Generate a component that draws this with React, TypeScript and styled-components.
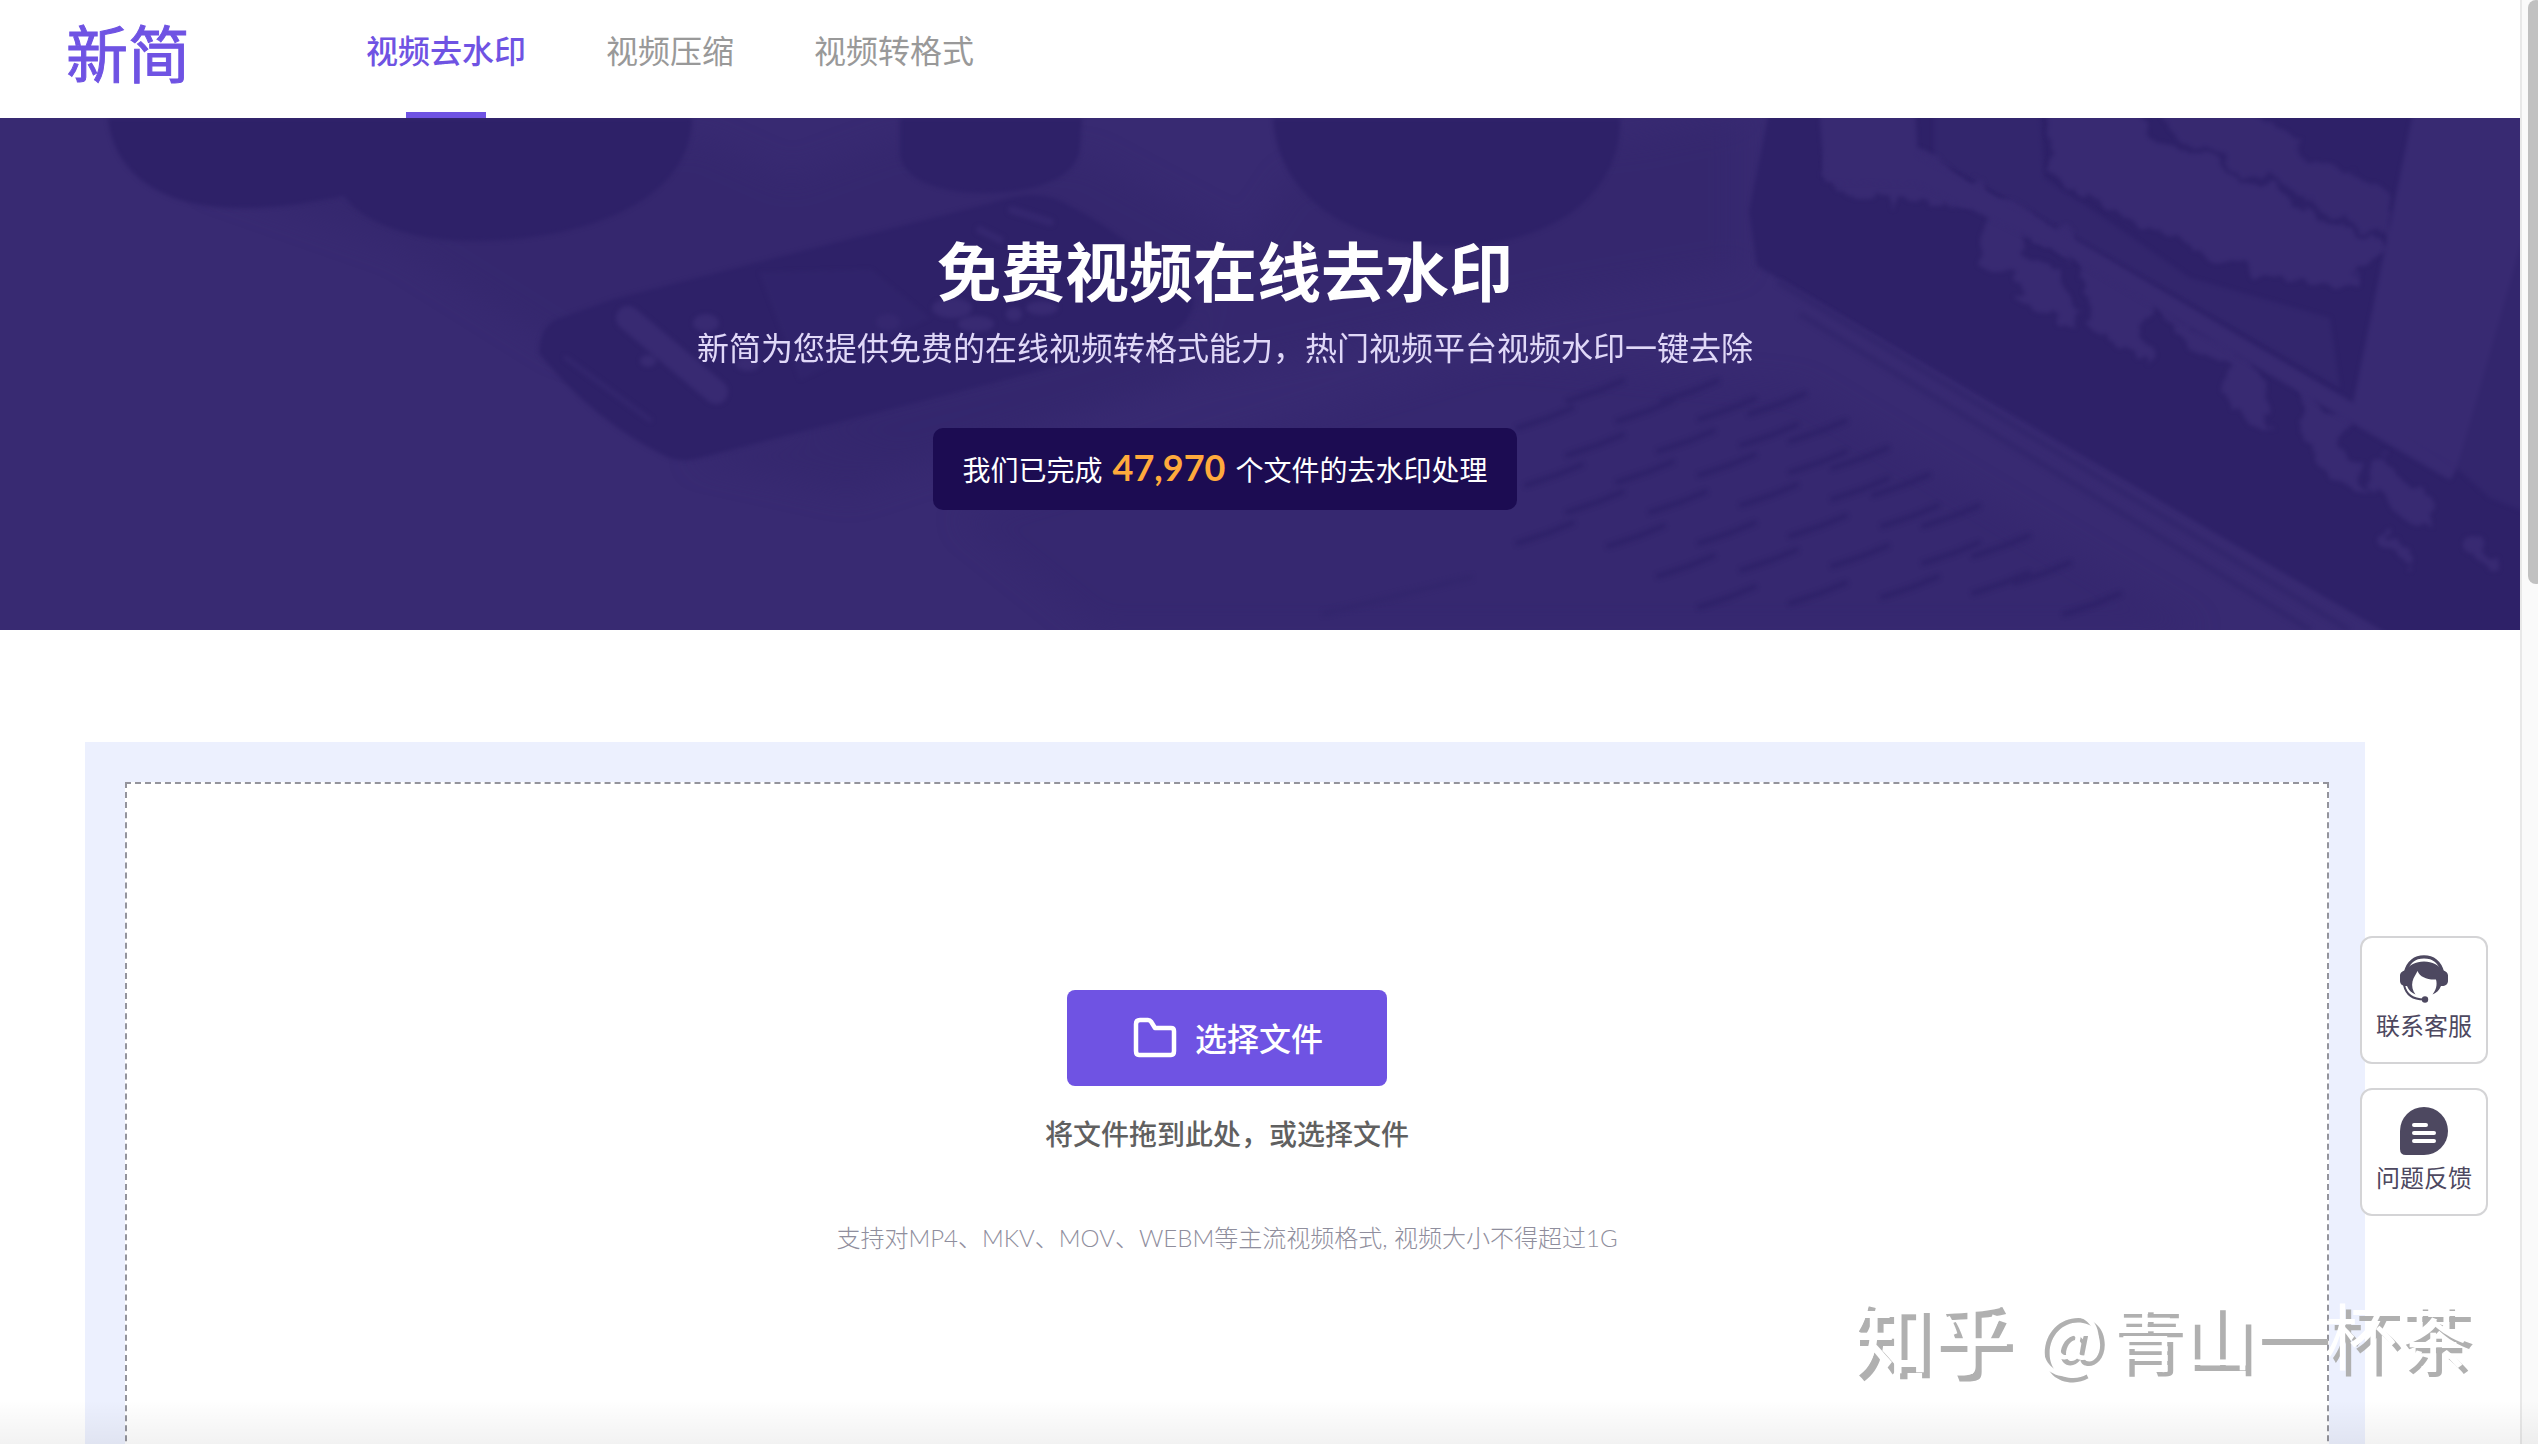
import React from "react";
import styled, { createGlobalStyle } from "styled-components";

const colors = {
  brand: "#6f53e3",
  hero: "#382a72",
  heroMid: "#33266d",
  heroDark: "#2e2168",
  pill: "#1c0c52",
  amber: "#ffaa3c",
  panel: "#ecf0fe",
  ink: "#4d4860",
};

const GlobalStyle = createGlobalStyle`
  *, *::before, *::after { box-sizing: border-box; }
  body {
    margin: 0;
    background: #fff;
    font-family: Lato, "Noto Sans CJK SC", sans-serif;
  }
  h1, p { margin: 0; }
`;

const Shell = styled.div`
  position: relative;
  display: flex;
  height: 100vh;
  overflow: hidden;
`;

const Page = styled.div`
  flex: 1;
  min-width: 0;
`;

const Header = styled.header`
  display: flex;
  align-items: stretch;
  height: 118px;
  padding-left: 66px;
  background: #fff;
`;

const Logo = styled.a`
  width: 300px;
  color: ${colors.brand};
  font-size: 62px;
  font-weight: 400;
  line-height: 108px;
  text-decoration: none;
  -webkit-text-stroke: 1px ${colors.brand};
`;

const Nav = styled.nav`
  display: flex;
  gap: 80px;
`;

const NavLink = styled.a<{ $active?: boolean }>`
  display: flex;
  flex-direction: column;
  align-items: center;
  justify-content: space-between;
  color: ${(p) => (p.$active ? colors.brand : "#999")};
  font-size: 32px;
  font-weight: ${(p) => (p.$active ? 500 : 400)};
  line-height: 102px;
  text-decoration: none;

  &::after {
    content: "";
    width: 80px;
    height: 6px;
    background: ${(p) => (p.$active ? colors.brand : "transparent")};
  }
`;

const Hero = styled.section`
  position: relative;
  display: flex;
  flex-direction: column;
  align-items: center;
  height: 512px;
  padding: 106px 70px 0 0;
  background: ${colors.hero};
  overflow: hidden;
`;

const HeroArt = styled.svg`
  position: absolute;
  inset: 0;
  width: 100%;
  height: 100%;
`;

const HeroTitle = styled.h1`
  position: relative;
  color: #fff;
  font-size: 64px;
  font-weight: 700;
  line-height: 96px;
`;

const HeroText = styled.p`
  position: relative;
  color: #e0d8f8;
  font-size: 32px;
  font-weight: 400;
  line-height: 56px;
`;

const Counter = styled.p`
  position: relative;
  display: flex;
  align-items: center;
  gap: 10px;
  height: 82px;
  margin-top: 52px;
  padding: 0 30px;
  border-radius: 10px;
  background: ${colors.pill};
  color: #fff;
  font-size: 28px;
  font-weight: 400;
`;

const CounterValue = styled.strong`
  padding-bottom: 4px;
  color: ${colors.amber};
  font-size: 36px;
  font-weight: 700;
`;

const Panel = styled.main`
  margin: 112px 155px 0 85px;
  padding: 40px 36px 40px 40px;
  background: ${colors.panel};
`;

const DropZone = styled.section`
  display: flex;
  flex-direction: column;
  align-items: center;
  min-height: 800px;
  padding-top: 206px;
  border: 2px dashed #94949c;
  background: #fff;
`;

const PickButton = styled.button`
  display: flex;
  align-items: center;
  justify-content: center;
  gap: 16px;
  width: 320px;
  height: 96px;
  padding: 0 0 2px;
  border: 0;
  border-radius: 8px;
  background: ${colors.brand};
  color: #fff;
  font: inherit;
  font-size: 32px;
  font-weight: 500;
`;

const DropHint = styled.p`
  margin-top: 28px;
  color: #606060;
  font-size: 28px;
  font-weight: 500;
  line-height: 40px;
`;

const DropNote = styled.p`
  margin-top: 66px;
  color: #8f8e9d;
  font-size: 24px;
  font-weight: 300;
  line-height: 36px;
`;

const SideTools = styled.aside`
  position: absolute;
  top: 936px;
  right: 50px;
  display: flex;
  flex-direction: column;
  gap: 24px;
`;

const SideButton = styled.button`
  display: flex;
  flex-direction: column;
  align-items: center;
  width: 128px;
  height: 128px;
  padding: 17px 0 0;
  border: 2px solid #d4d4d6;
  border-radius: 12px;
  background: #fff;
  color: ${colors.ink};
  font: inherit;
  font-size: 24px;
  font-weight: 400;
  line-height: 46px;
`;

const Watermark = styled.div`
  position: absolute;
  right: 69px;
  bottom: 59px;
  display: flex;
  align-items: center;
  color: #fff;
  font-family: "Noto Sans CJK SC", sans-serif;
  font-size: 72px;
  line-height: 104px;
  text-shadow: 6px 6px 0 #b0b0b0;
`;

const WatermarkBrand = styled.span`
  margin-right: 24px;
  font-size: 80px;
  font-weight: 500;
`;

const WatermarkAt = styled.span`
  margin-right: 6px;
`;

const BottomShade = styled.div`
  position: absolute;
  inset: auto 0 0;
  height: 44px;
  background: linear-gradient(rgba(0, 0, 0, 0), rgba(0, 0, 0, 0.05));
  pointer-events: none;
`;

const ScrollTrack = styled.div`
  flex: none;
  width: 18px;
  padding-left: 6px;
  border-left: 2px solid #e8e8e8;
  background: #fafafa;
  overflow: hidden;
`;

const ScrollThumb = styled.div`
  width: 16px;
  height: 584px;
  border-radius: 8px;
  background: #c1c1c1;
`;

const keys: [number, number][] = [
  [1596, 273], [1691, 273], [1778, 286],
  [1546, 300], [1646, 293], [1728, 291], [1819, 313],
  [1596, 327], [1687, 323], [1770, 317], [1861, 340],
  [1555, 357], [1646, 354], [1728, 347], [1819, 344], [1902, 367],
  [1596, 384], [1679, 384], [1770, 377], [1861, 371], [1952, 398],
  [1546, 415], [1637, 418], [1728, 415], [1819, 408], [1911, 398], [2002, 428],
  [1687, 448], [1770, 442], [1861, 438], [1952, 435], [2043, 455],
  [1728, 479], [1819, 475], [1911, 469], [2002, 465], [2093, 486],
];

function DeskScene() {
  return (
    <HeroArt viewBox="0 0 2520 512" preserveAspectRatio="xMidYMid slice" aria-hidden="true">
      <defs>
        <filter id="soft" x="-10%" y="-10%" width="120%" height="120%" colorInterpolationFilters="sRGB">
          <feGaussianBlur stdDeviation="14" />
        </filter>
        <filter id="edge" x="-5%" y="-5%" width="110%" height="110%" colorInterpolationFilters="sRGB">
          <feGaussianBlur stdDeviation="2" />
        </filter>
        <filter id="ragged" x="-5%" y="-5%" width="110%" height="110%" colorInterpolationFilters="sRGB">
          <feTurbulence type="fractalNoise" baseFrequency="0.035" numOctaves="3" seed="4" result="noise" />
          <feDisplacementMap in="SourceGraphic" in2="noise" scale="34" xChannelSelector="R" yChannelSelector="G" />
          <feGaussianBlur stdDeviation="2" />
        </filter>
      </defs>

      <g fill={colors.heroMid} filter="url(#soft)">
        <path d="M200 60L700 20L790 60L900 20L1090 40L1240 120L1180 260L900 340L560 230L400 130Z" opacity="0.6" />
        <path d="M690 340L1190 210L1290 60L1640 20L1740 0V150L1560 180L1200 260L850 375Z" opacity="0.6" />
        <path d="M960 400L1500 240L1800 270L2200 512H1100Z" opacity="0.5" />
      </g>

      <g fill={colors.heroDark} filter="url(#edge)">
        <path d="M108 0C112 46 150 90 240 90C290 90 320 82 344 78C362 104 410 123 473 123C590 123 692 80 692 0Z" />
        <path d="M900 0V36C902 62 940 75 983 75C1040 75 1078 58 1080 30L1082 0Z" />
        <path d="M1273 0C1276 70 1340 128 1450 128C1560 128 1622 70 1620 0Z" />
        <path d="M995 84Q1040 68 1070 88Q1120 112 1194 181Q1192 214 1144 226L700 340Q680 346 663 337Q590 300 539 235Q540 206 560 200L614 181Z" />
      </g>

      <g fill={colors.hero} stroke={colors.hero} filter="url(#edge)">
        <path d="M628 200L716 274" strokeWidth="24" strokeLinecap="round" />
        <path d="M1012 92L1050 104M980 112L1000 122" strokeWidth="8" strokeLinecap="round" opacity="0.7" />
        <path d="M566 240L650 302" strokeWidth="5" strokeLinecap="round" opacity="0.6" />
        <path d="M759 154L871 151L930 200L800 262Z" opacity="0.25" stroke="none" />
        <g stroke="none">
          <ellipse cx="706" cy="205" rx="13" ry="9" />
          <ellipse cx="648" cy="243" rx="8" ry="6" />
          <ellipse cx="748" cy="246" rx="12" ry="7" />
          <ellipse cx="888" cy="204" rx="12" ry="8" opacity="0.7" />
          <ellipse cx="952" cy="190" rx="20" ry="10" />
          <ellipse cx="976" cy="206" rx="18" ry="8" />
          <ellipse cx="1014" cy="196" rx="8" ry="7" />
          <ellipse cx="1042" cy="190" rx="16" ry="7" />
        </g>
      </g>

      <path filter="url(#edge)" fill={colors.heroDark} d="M1770 -10L1749 93L1757 148L2395 520H2540V-10Z" />
      <path filter="url(#edge)" fill={colors.heroMid} d="M1934 -10H2040L2044 60L2110 104L2190 160L2330 200L2340 270L2070 116L1934 40Z" />
      <g filter="url(#ragged)" fill={colors.hero}>
        <path d="M2051 -20H2117L2175 29L2382 124L2358 168L2258 158L2109 93L2047 53Z" />
        <path d="M2142 -20H2233L2308 33L2391 77V120L2192 29Z" opacity="0.85" />
        <path d="M1825 60L1850 82L1880 70L1900 92L1920 76L1960 96L1990 84L2068 140L2068 120L1918 30H1825Z" />
        <path d="M1977 80L2030 104L2020 138L2060 150L2076 208L2030 185L2010 158L1980 152Z" />
        <path d="M2080 130L2160 176L2146 190L2150 245L2108 222L2088 196Z" />
        <path d="M2150 180L2236 232L2262 256L2275 312L2234 294L2226 250L2176 224Z" />
        <path d="M2290 260L2346 300L2340 330L2374 372L2326 356L2308 328Z" />
        <path d="M2376 340L2420 368L2438 416L2370 378Z" />
        <path d="M2390 418L2406 446M2470 420L2486 444" stroke={colors.hero} strokeWidth="12" strokeLinecap="round" />
      </g>
      <g filter="url(#edge)">
        <g fill={colors.hero}>
          <path d="M1819 -10H1915L1918 38L2068 117L2355 286L2457 350L2450 362L2340 298L2068 138L1918 66L1825 64Z" />
          <path d="M2414 -10H2540V93L2457 350L2353 286Z" />
        </g>
        <path fill={colors.heroMid} d="M2540 60L2457 350L2490 380L2540 400Z" />
        <path fill="none" stroke={colors.heroMid} strokeWidth="6" d="M1778 164L2349 512M1800 196L2310 512" />
        <path fill="none" stroke={colors.heroMid} strokeWidth="5" d="M1323 496L1472 459" />
      </g>

      <g fill="none" stroke={colors.heroDark} strokeWidth="6" strokeLinecap="round" opacity="0.8" filter="url(#edge)">
        {keys.map(([x, y]) => (
          <path key={`${x}-${y}`} d={`M${x - 28} ${y + 10}L${x + 2} ${y}L${x + 26} ${y - 10}`} />
        ))}
      </g>
    </HeroArt>
  );
}

function FolderIcon() {
  return (
    <svg width="48" height="48" viewBox="0 0 48 48" fill="none" aria-hidden="true">
      <path
        d="M5 11Q5 7 9 7H17Q19 7 20 8.500L24 15H40Q43 15 43 18V38Q43 42 40 42H8Q5 42 5 38Z"
        stroke="#fff"
        strokeWidth="4.500"
        strokeLinejoin="round"
      />
    </svg>
  );
}

function AgentIcon() {
  return (
    <svg width="48" height="48" viewBox="0 0 48 48" aria-hidden="true">
      <path d="M5.500 17C8 7 15 1.800 24 1.800S40 7 42.500 17" fill="none" stroke={colors.ink} strokeWidth="3.200" />
      <path d="M6 15.500C3 15.500 0 17.500 0 20.500V26C0 29 2.500 31 6 31H7C8.500 35 11.500 38 15.500 39.500C12.500 35.500 11.500 31 12.500 26.500C13.500 22 16 19.500 17.500 16C20 22 27 25 36 24.500C37.500 30 36 35 32.500 39.500C36.500 38 39.500 35 41 31H42C45.500 31 48 29 48 26V20.500C48 17.500 45 15.500 42 15.500C39 10 32.500 6.500 24 6.500S9 10 6 15.500Z" fill={colors.ink} />
      <path d="M4 30C6 39 13 44.500 24 44.500" fill="none" stroke={colors.ink} strokeWidth="2" />
      <circle cx="25" cy="44.500" r="3.200" fill={colors.ink} />
    </svg>
  );
}

function FeedbackIcon() {
  return (
    <svg width="48" height="48" viewBox="0 0 48 48" aria-hidden="true">
      <path d="M24 0A24 24 0 0 1 24 48H6Q0 48 0 42V24A24 24 0 0 1 24 0Z" fill={colors.ink} />
      <path d="M14 18H26M14 26H34M14 34H34" stroke="#fff" strokeWidth="4" strokeLinecap="round" />
    </svg>
  );
}

export default function App() {
  return (
    <>
      <GlobalStyle />
      <Shell>
        <Page>
          <Header>
            <Logo href="#home">新简</Logo>
            <Nav>
              <NavLink href="#watermark" $active>视频去水印</NavLink>
              <NavLink href="#compress">视频压缩</NavLink>
              <NavLink href="#convert">视频转格式</NavLink>
            </Nav>
          </Header>
          <Hero>
            <DeskScene />
            <HeroTitle>免费视频在线去水印</HeroTitle>
            <HeroText>新简为您提供免费的在线视频转格式能力，热门视频平台视频水印一键去除</HeroText>
            <Counter>
              <span>我们已完成</span>
              <CounterValue>47,970</CounterValue>
              <span>个文件的去水印处理</span>
            </Counter>
          </Hero>
          <Panel>
            <DropZone>
              <PickButton type="button">
                <FolderIcon />
                选择文件
              </PickButton>
              <DropHint>将文件拖到此处，或选择文件</DropHint>
              <DropNote>支持对MP4、MKV、MOV、WEBM等主流视频格式, 视频大小不得超过1G</DropNote>
            </DropZone>
          </Panel>
        </Page>
        <ScrollTrack>
          <ScrollThumb />
        </ScrollTrack>
        <SideTools>
          <SideButton type="button">
            <AgentIcon />
            联系客服
          </SideButton>
          <SideButton type="button">
            <FeedbackIcon />
            问题反馈
          </SideButton>
        </SideTools>
        <Watermark>
          <WatermarkBrand>知乎</WatermarkBrand>
          <WatermarkAt>@</WatermarkAt>
          <span>青山一杯茶</span>
        </Watermark>
        <BottomShade />
      </Shell>
    </>
  );
}
